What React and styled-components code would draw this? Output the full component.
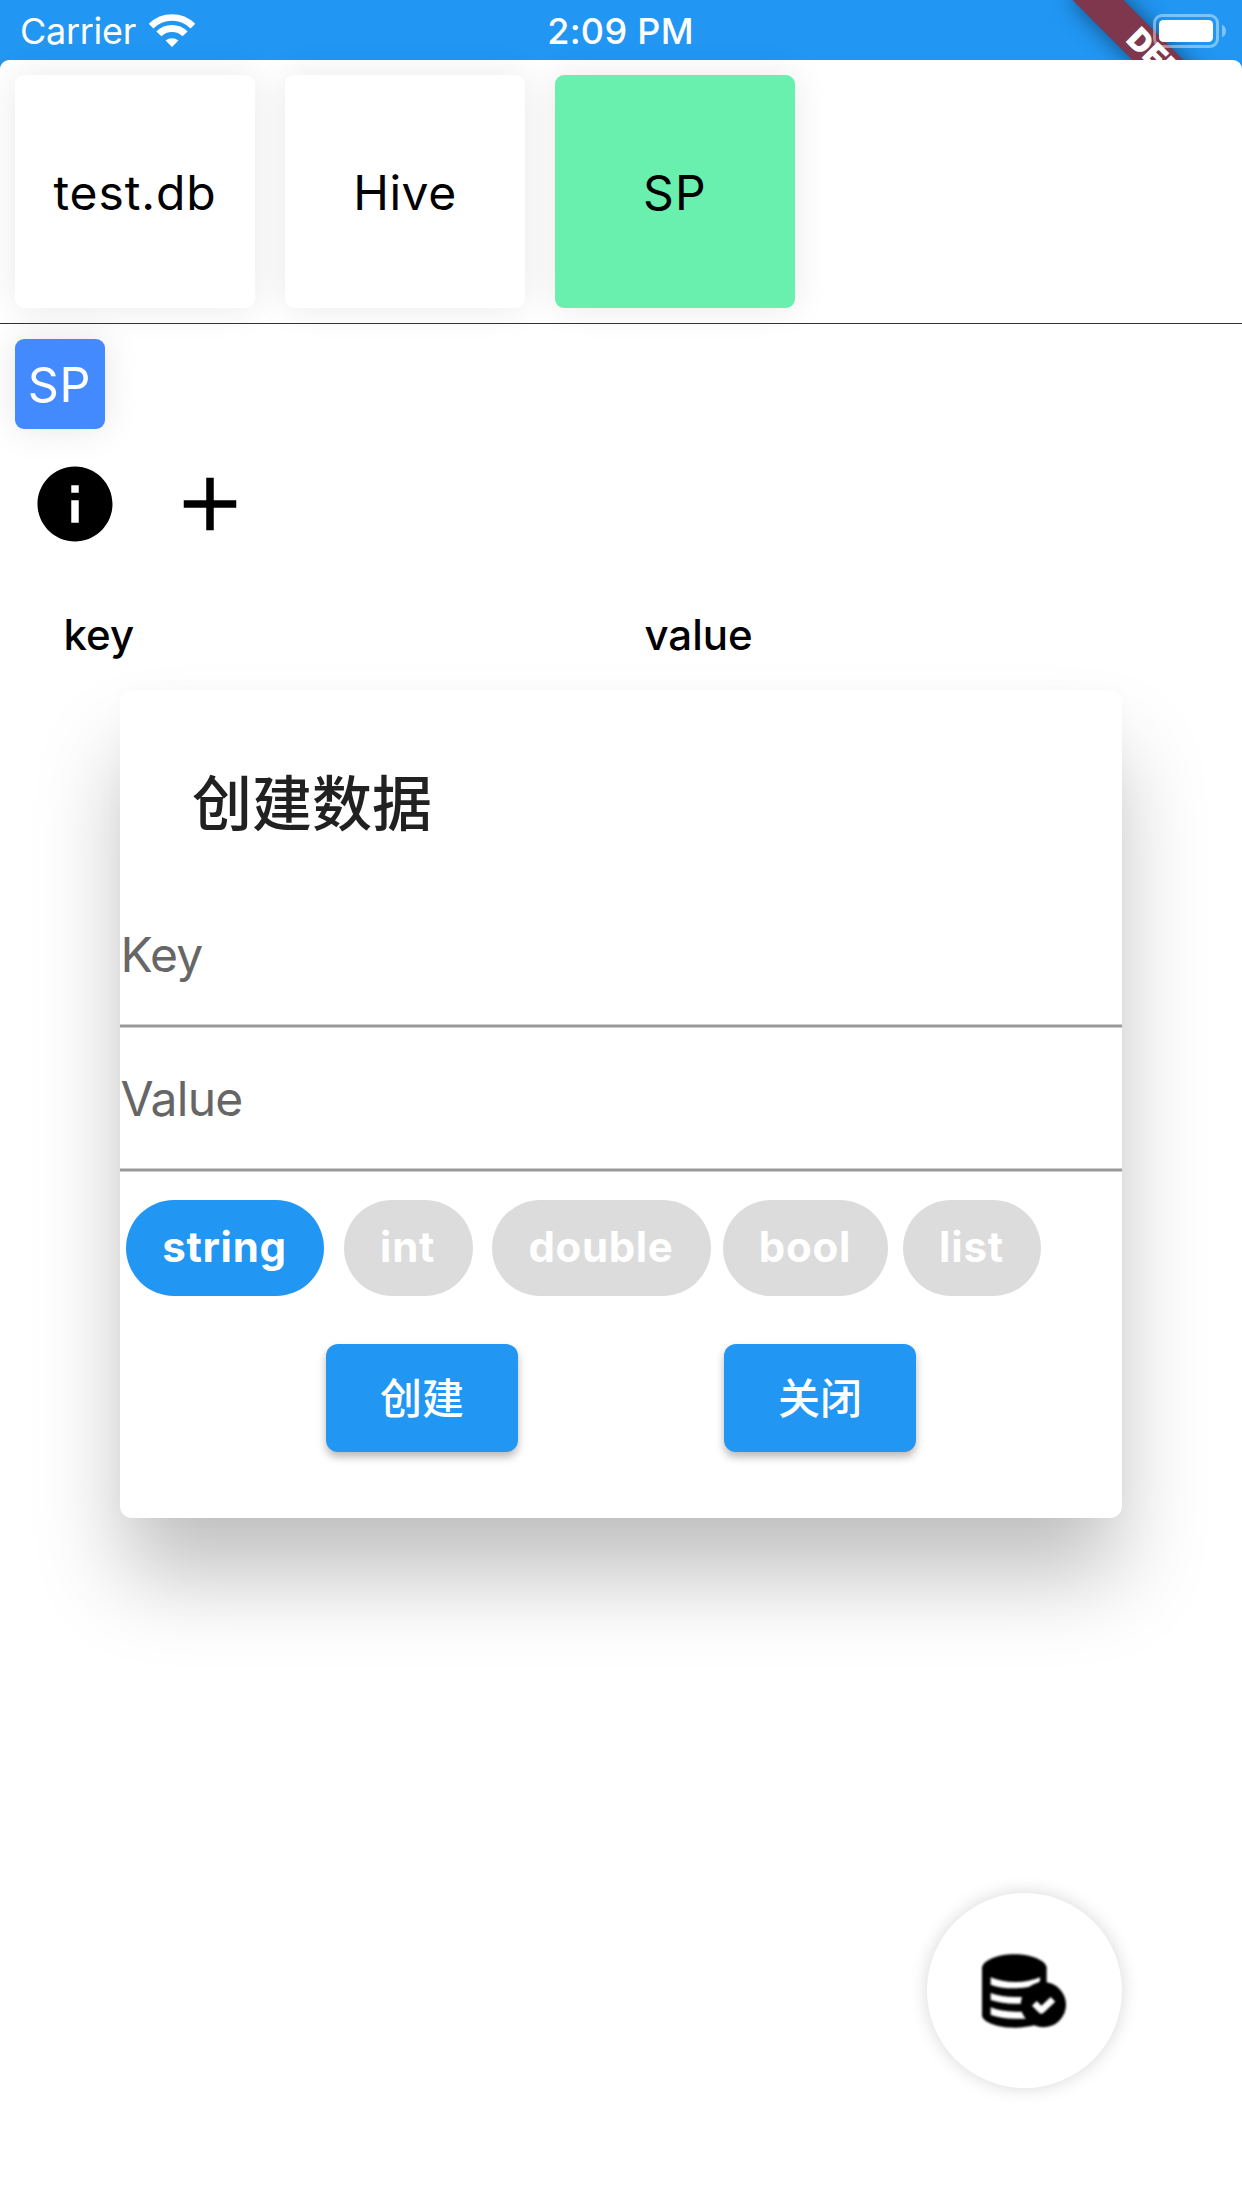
import React from "react";
import styled, { createGlobalStyle } from "styled-components";

const GlobalStyle = createGlobalStyle`
  *, *::before, *::after { box-sizing: border-box; }
  html, body { margin: 0; padding: 0; background: #2196f3; }
  body { font-family: Inter, "Noto Sans CJK SC", sans-serif; color: #000; }
  button { font-family: inherit; border: 0; padding: 0; margin: 0; background: none; color: inherit; }
`;

const Screen = styled.div`
  position: relative;
  width: 1242px;
  height: 2208px;
  overflow: hidden;
  background: #2196f3;
  display: flex;
  flex-direction: column;
`;

const StatusBar = styled.header`
  position: relative;
  height: 60px;
  flex: none;
  overflow: hidden;
  display: grid;
  grid-template-columns: 1fr auto 1fr;
  align-items: center;
  padding: 2px 16px 0 20px;
  color: #fff;
  font-size: 36px;
  line-height: 58px;
`;

const Carrier = styled.div`
  display: flex;
  align-items: center;
  gap: 13px;
  letter-spacing: -0.3px;
`;

const Clock = styled.div`
  padding-right: 5px;
  font-weight: 500;
  letter-spacing: 0.3px;
`;

const BatterySlot = styled.div`
  display: flex;
  justify-content: flex-end;
  position: relative;
`;

const DebugBanner = styled.div`
  position: absolute;
  left: 1050px;
  top: 54px;
  width: 240px;
  height: 36px;
  line-height: 33px;
  transform: rotate(45deg);
  background: #7e374c;
  box-shadow: 0 0 22px rgba(0, 0, 0, 0.5);
  text-align: center;
  font-size: 31px;
  font-weight: 900;
`;

const Content = styled.main`
  flex: 1;
  background: #fff;
  border-radius: 9px 9px 0 0;
`;

const DatabaseRail = styled.nav`
  height: 264px;
  display: flex;
  gap: 30px;
  padding: 15px 15px 0;
  border-bottom: 1px solid #333;
`;

const DatabaseTile = styled.button`
  width: 240px;
  height: 233.3px;
  padding: 2px 0 0 0;
  border-radius: 9px;
  background: ${(p) => (p.$active ? "#69f0ae" : "#fff")};
  box-shadow: 0 0 36px rgba(0, 0, 0, 0.09);
  font-size: 48px;
  letter-spacing: ${(p) => p.$spacing}px;
`;

const TableRow = styled.div`
  display: flex;
  padding: 15px 15px 0;
`;

const TableChip = styled.button`
  width: 90px;
  height: 90px;
  padding-right: 1px;
  border-radius: 9px;
  background: #448aff;
  color: #fff;
  font-size: 48.5px;
  letter-spacing: 0.6px;
  box-shadow: 0 0 36px rgba(0, 0, 0, 0.1);
`;

const Toolbar = styled.div`
  display: flex;
  gap: 15px;
  padding: 15px 15px 0;
`;

const ToolButton = styled.button`
  width: 120px;
  height: 120px;
  display: grid;
  place-items: center;
`;

const ColumnHeads = styled.div`
  display: grid;
  grid-template-columns: 581px 1fr;
  padding-left: 63.5px;
  height: 141px;
  align-items: center;
  font-size: 42px;
  font-weight: 500;
`;

const DialogLayer = styled.div`
  position: absolute;
  inset: 0;
  display: flex;
  justify-content: center;
  align-items: center;
`;

const Dialog = styled.section`
  width: 1002px;
  height: 828px;
  border-radius: 12px;
  background: #fff;
  box-shadow: 0 62px 88px -5px rgba(0, 0, 0, 0.25), 0 0 24px rgba(0, 0, 0, 0.02);
`;

const DialogTitle = styled.h1`
  margin: 0;
  height: 193px;
  padding: 72px 72px 0;
  font-size: 60px;
  line-height: 84px;
  font-weight: 500;
  color: #212121;
`;

const Field = styled.input`
  display: block;
  width: 100%;
  height: 144px;
  padding: 0 0 0 0.5px;
  border: 0;
  border-radius: 0;
  border-bottom: 2px solid #999;
  box-shadow: inset 0 -1px 0 #ccc, 0 1px 0 #ccc;
  outline: 0;
  background: none;
  font-family: inherit;
  font-size: 48px;
  letter-spacing: ${(p) => p.$spacing}px;
  &::placeholder { color: #666; opacity: 1; }
`;

const TypeRow = styled.div`
  display: flex;
  padding-top: 29px;
`;

const TypePill = styled.button`
  width: ${(p) => p.$width}px;
  margin-left: ${(p) => p.$gap}px;
  height: 96px;
  padding: 0 1px 3px 0;
  border-radius: 48px;
  background: ${(p) => (p.$active ? "#2196f3" : "#dcdcdc")};
  color: #fff;
  font-size: 42px;
  font-weight: 700;
  letter-spacing: ${(p) => p.$spacing}px;
`;

const Actions = styled.div`
  display: flex;
  justify-content: space-evenly;
  padding-top: 48px;
`;

const ActionButton = styled.button`
  width: 192px;
  height: 108px;
  padding-bottom: 6px;
  border-radius: 12px;
  background: #2196f3;
  color: #fff;
  font-size: 42px;
  font-weight: 500;
  box-shadow: 0 5px 9px rgba(0, 0, 0, 0.28);
`;

const FloatingButton = styled.button`
  position: absolute;
  left: 927px;
  top: 1893px;
  width: 195px;
  height: 195px;
  padding-right: 2px;
  border-radius: 50%;
  background: #fff;
  box-shadow: 0 0 18px rgba(0, 0, 0, 0.16);
  display: grid;
  place-items: center;
`;

const SoftIcon = styled.svg`
  filter: blur(0.8px);
`;

const WifiIcon = () => (
  <svg width="46" height="34" viewBox="0 0 46 34" fill="none">
    <path d="M2.1 12.1A29.6 29.6 0 0 1 43.9 12.1" stroke="#fff" strokeWidth="6.6" />
    <path d="M9.9 19.9A18.5 18.5 0 0 1 36.1 19.9" stroke="#fff" strokeWidth="7" />
    <path d="M16.6 26.6A10 10 0 0 1 29.4 26.6L23 33Z" fill="#fff" />
  </svg>
);

const BatteryIcon = () => (
  <svg width="73" height="34" viewBox="0 0 73 34">
    <rect x="1.5" y="1.5" width="63" height="31" rx="7.5" fill="none" stroke="#fff" strokeOpacity=".42" strokeWidth="3" />
    <rect x="6" y="6" width="54" height="22" rx="4.5" fill="#fff" />
    <path d="M69 10.5Q73 12.5 73 17T69 23.5Z" fill="#fff" fillOpacity=".42" />
  </svg>
);

const InfoIcon = () => (
  <svg width="90" height="90" viewBox="0 0 24 24">
    <path d="M12 2C6.48 2 2 6.48 2 12s4.48 10 10 10 10-4.480 10-10S17.520 2 12 2zm1 15h-2v-6h2v6zm0-8h-2V7h2v2z" />
  </svg>
);

const AddIcon = () => (
  <svg width="90" height="90" viewBox="0 0 24 24">
    <path d="M19 13h-6v6h-2v-6H5v-2h6V5h2v6h6v2z" />
  </svg>
);

const DatabaseCheckIcon = () => (
  <SoftIcon width="84" height="74" viewBox="0 0 252 222">
    <path d="M0 40C6 18 46 1 97 1s91 17 97 39V190C186 208 148 221 97 221S6 206 0 186Z" />
    <g fill="#fff">
      <path d="M26 70Q58 84 100 84T174 70V82Q150 103 100 103T26 92Z" />
      <path d="M26 117Q58 129 100 129H130V149H100Q58 149 26 138Z" />
      <path d="M26 160Q58 173 100 173H140V194H100Q58 194 26 183Z" />
    </g>
    <circle cx="184" cy="152" r="68" />
    <path d="M157 148L178 169L213 136" fill="none" stroke="#fff" strokeWidth="20" strokeLinejoin="round" />
  </SoftIcon>
);

const databases = [
  { name: "test.db", spacing: 0.9 },
  { name: "Hive", spacing: 0.6 },
  { name: "SP", spacing: 1.3, active: true },
];

const types = [
  { name: "string", width: 198, gap: 6, spacing: 0.7, active: true },
  { name: "int", width: 129, gap: 19.6, spacing: 0.7 },
  { name: "double", width: 219, gap: 19.4, spacing: 0.6 },
  { name: "bool", width: 165, gap: 12, spacing: 0.8 },
  { name: "list", width: 138, gap: 15, spacing: 0.8 },
];

export default function App() {
  return (
    <Screen>
      <GlobalStyle />
      <StatusBar>
        <DebugBanner>DEBUG</DebugBanner>
        <Carrier>
          Carrier
          <WifiIcon />
        </Carrier>
        <Clock>2:09 PM</Clock>
        <BatterySlot>
          <BatteryIcon />
        </BatterySlot>
      </StatusBar>
      <Content>
        <DatabaseRail>
          {databases.map((d) => (
            <DatabaseTile key={d.name} $active={d.active} $spacing={d.spacing}>
              {d.name}
            </DatabaseTile>
          ))}
        </DatabaseRail>
        <TableRow>
          <TableChip>SP</TableChip>
        </TableRow>
        <Toolbar>
          <ToolButton aria-label="info"><InfoIcon /></ToolButton>
          <ToolButton aria-label="add"><AddIcon /></ToolButton>
        </Toolbar>
        <ColumnHeads>
          <span>key</span>
          <span>value</span>
        </ColumnHeads>
      </Content>
      <FloatingButton aria-label="databases">
        <DatabaseCheckIcon />
      </FloatingButton>
      <DialogLayer>
        <Dialog>
          <DialogTitle>创建数据</DialogTitle>
          <Field placeholder="Key" $spacing={-0.8} />
          <Field placeholder="Value" $spacing={-0.7} />
          <TypeRow>
            {types.map((t) => (
              <TypePill key={t.name} $active={t.active} $width={t.width} $gap={t.gap} $spacing={t.spacing}>
                {t.name}
              </TypePill>
            ))}
          </TypeRow>
          <Actions>
            <ActionButton>创建</ActionButton>
            <ActionButton>关闭</ActionButton>
          </Actions>
        </Dialog>
      </DialogLayer>
    </Screen>
  );
}
